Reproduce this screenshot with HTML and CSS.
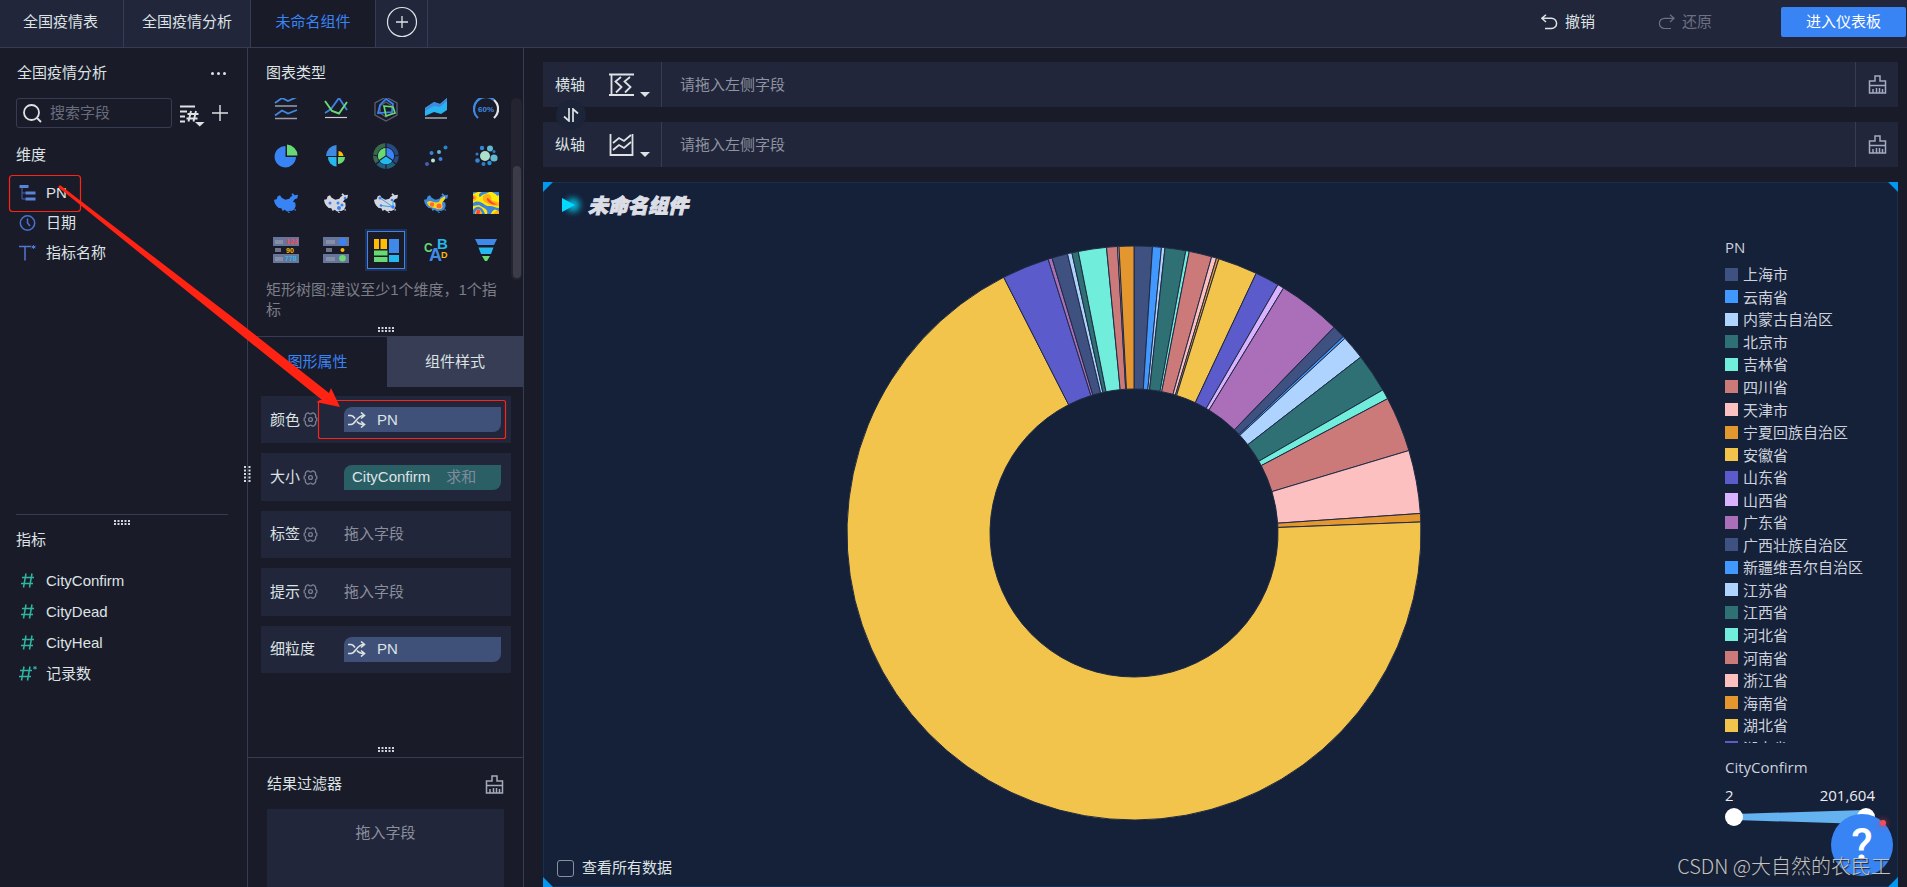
FILE: index.html
```html
<!DOCTYPE html>
<html lang="zh-CN">
<head>
<meta charset="utf-8">
<title>未命名组件</title>
<link rel="stylesheet" href="styles.css">
</head>
<body>
<svg class="sprite" aria-hidden="true">
  <symbol id="china" viewBox="0 0 72 60"><path d="M0 20 8 19 11 10 18 7 23 14 34 20 46 17 50 11 56 8 52 4 56 1 62 7 72 5 70 16 62 19 57 26 64 29 65 40 60 50 52 54 46 53 43 56 38 55 32 50 26 54 22 46 14 45 7 38 2 30ZM43 57h4v3h-4zM62 48h3v5h-3z"/></symbol>
  <symbol id="broom" viewBox="0 0 19 19"><path d="M7 6V1h5v5h5.500v12H1.500V6zM1.500 10.500h16M5 14v4M8.500 13V18M11.500 13V18M14.500 14v4" fill="none" stroke="currentColor" stroke-width="1.500"/></symbol>
  <symbol id="shuffle" viewBox="0 0 18 16"><path d="M0 12.500h3C8 12.500 8 3.500 16 3.500M0 3.500h3c2 0 3 1.500 4 3M9 9.500c1.500 2 3 3 7 3M13 .5l3.500 3L13 6.500M13 9.500l3.500 3-3.500 3" fill="none" stroke="currentColor" stroke-width="1.600"/></symbol>
  <symbol id="gear" viewBox="0 0 15 15"><path d="M4 1.200Q5.500.5 6.300 1.500 7.500 2.300 8.700 1.500 9.500.5 11 1.200L12.300 2.500Q13 4 12.500 5 12.800 6 13.800 6.300V8.700Q12.800 9 12.500 10 13 11 12.300 12.500L11 13.800Q9.500 14.500 8.700 13.500 7.500 12.700 6.300 13.500 5.500 14.500 4 13.800L2.700 12.500Q2 11 2.500 10 2.200 9 1.200 8.700V6.300Q2.200 6 2.500 5 2 4 2.700 2.500Z" fill="none" stroke="currentColor" stroke-width="1.300"/><circle cx="7.500" cy="7.500" r="1.900" fill="none" stroke="currentColor" stroke-width="1.300"/></symbol>
  <symbol id="hash" viewBox="0 0 14 15"><path d="M5 0.500 2.500 14.500M11 .5 8.500 14.500M1 4.500h12M0 10.500h12" fill="none" stroke="currentColor" stroke-width="1.500"/></symbol>
  <symbol id="grip" viewBox="0 0 16 5"><path d="M0 1h16M0 4h16" stroke="currentColor" stroke-width="2" stroke-dasharray="2 1.500" fill="none"/></symbol>
</svg>

<header class="topbar">
  <nav class="tabs">
    <button class="tab tab-a">全国疫情表</button>
    <button class="tab tab-b">全国疫情分析</button>
    <button class="tab tab-c active">未命名组件</button>
    <button class="tab tab-add" aria-label="添加"><svg width="32" height="32" viewBox="0 0 32 32"><circle cx="16" cy="16" r="14.500" fill="none" stroke="currentColor" stroke-width="1.200"/><path d="M10 16h12M16 10v12" stroke="currentColor" stroke-width="1.300"/></svg></button>
  </nav>
  <div class="actions">
    <button class="action"><svg width="17" height="16" viewBox="0 0 17 16"><path d="M5 .7.900 4.300 5 8M1 4.300h9.500a5 5 0 0 1 0 10.200H4" fill="none" stroke="currentColor" stroke-width="1.500"/></svg>撤销</button>
    <button class="action off"><svg width="17" height="16" viewBox="0 0 17 16"><path d="M12 .7l4.100 3.600L12 8M16 4.300H6.500a5 5 0 0 0 0 10.200H13" fill="none" stroke="currentColor" stroke-width="1.200"/></svg>还原</button>
    <button class="enter">进入仪表板</button>
  </div>
</header>

<div class="work">
  <aside class="fields">
    <div class="fields-head"><span>全国疫情分析</span><button class="dots" aria-label="更多"><i></i><i></i><i></i></button></div>
    <div class="search-row">
      <label class="search"><svg width="19" height="19" viewBox="0 0 19 19"><circle cx="8.500" cy="8.500" r="7.500" fill="none" stroke="currentColor" stroke-width="1.800"/><path d="M14 14l4 4" stroke="currentColor" stroke-width="1.800"/></svg><input type="text" placeholder="搜索字段" aria-label="搜索字段"></label>
      <button class="plain sorter" aria-label="筛选"><svg width="26" height="23" viewBox="0 0 26 23"><path d="M1 2.500h15M1 7.500h7M1 12.500h5M1 17.500h5" stroke="currentColor" stroke-width="2"/><path d="M12 7 9.500 17.500M17 7 14.500 17.500M8.500 10h11M7.500 14.500h11" stroke="currentColor" stroke-width="1.900"/><path d="M16 18h9.500L20.700 22.500z" fill="currentColor"/></svg></button>
      <button class="plain" aria-label="新增"><svg width="16" height="16" viewBox="0 0 16 16"><path d="M0 8h16M8 0v16" stroke="currentColor" stroke-width="1.400"/></svg></button>
    </div>
    <section class="dims">
      <h2>维度</h2>
      <ul>
        <li><svg width="16" height="16" viewBox="0 0 16 16"><path d="M2.500 2v12H6M2.500 8H6" fill="none" stroke="#3c65bd"/><path d="M0 1.500h9M6 8h10M6 14h10" stroke="#5b83d8" stroke-width="3"/></svg>PN</li>
        <li><svg width="16" height="16" viewBox="0 0 16 16"><circle cx="8" cy="8" r="7.200" fill="none" stroke="#4a72d0" stroke-width="1.500"/><path d="M8 3.500V8l2.500 3" fill="none" stroke="#4a72d0" stroke-width="1.500"/></svg>日期</li>
        <li><svg width="17" height="16" viewBox="0 0 17 16"><path d="M0 1.500h12M6 1.500V15.500" stroke="#4f78d0" stroke-width="1.500"/><path d="M14.500 0v4M12.500 1l4 2M16.500 1l-4 2" stroke="#4f78d0"/></svg>指标名称</li>
      </ul>
    </section>
    <section class="measures">
      <svg class="grip" width="16" height="5"><use href="#grip"/></svg>
      <h2>指标</h2>
      <ul>
        <li><svg width="14" height="15"><use href="#hash"/></svg>CityConfirm</li>
        <li><svg width="14" height="15"><use href="#hash"/></svg>CityDead</li>
        <li><svg width="14" height="15"><use href="#hash"/></svg>CityHeal</li>
        <li><svg width="18" height="15" viewBox="0 0 18 15"><use href="#hash" width="14" height="15"/><path d="M16 0v3.500M14.300 1l3.400 1.700M17.700 1l-3.400 1.700" stroke="currentColor"/></svg>记录数</li>
      </ul>
    </section>
    <svg class="grip-v" width="7" height="16" viewBox="0 0 7 16"><path d="M1 0v16M5.500 0v16" stroke="#d5dae2" stroke-width="2" stroke-dasharray="2 1.500"/></svg>
  </aside>

  <aside class="config">
    <section class="types">
      <h2>图表类型</h2>
      <div class="type-scroll">
        <div class="type-grid">
          <button><svg width="26" height="26" viewBox="0 0 26 26"><path d="M2 10h22M2 22.500h22" stroke="#9a9dab" stroke-width="1.300"/><path d="M2 7l7-5 6 3 9-4M2 19.500l7-5 6 3 9-3.500" stroke="#3f8ae0" stroke-width="1.800" fill="none"/></svg></button>
          <button><svg width="26" height="26" viewBox="0 0 26 26"><path d="M2 21.500h22" stroke="#c9ccd4" stroke-width="1.200"/><path d="M2 17 8 13 16 2 24 14" stroke="#3f7fe0" stroke-width="1.900" fill="none"/><path d="M2 5 9 15l7 2.500L24 6" stroke="#69d973" stroke-width="1.900" fill="none"/></svg></button>
          <button><svg width="26" height="26" viewBox="0 0 26 26"><path d="M13 1l11 6v12l-11 6-11-6V7zM13 6l6 4v7l-6 4-6-4v-7z" stroke="#5a5e6c" stroke-width="1.300" fill="none"/><path d="M13 3l7 5-1 8-14 1 2-8z" stroke="#3884f4" stroke-width="1.700" fill="none"/><path d="M11 10l9 1 2 6-9 3z" stroke="#69d973" stroke-width="1.700" fill="none"/></svg></button>
          <button><svg width="26" height="26" viewBox="0 0 26 26"><path d="M2 22h22" stroke="#c9ccd4" stroke-width="1.200"/><path d="M2 12l9-6 6 2 7-6v12l-6 4-7-2-9 4z" fill="#28b4f0"/><path d="M2 12l9-6 6 2 7-6v3l-7 6-6-1-9 5z" fill="#3f8ae0"/></svg></button>
          <button><svg width="26" height="26" viewBox="0 0 26 26"><path d="M5 22A12 12 0 0 1 21 4" stroke="#3f8ae0" stroke-width="2.300" fill="none"/><path d="M21 4a12 12 0 0 1 0 18" stroke="#e2e4e8" stroke-width="2.300" fill="none"/><text x="13" y="16" font-size="8" text-anchor="middle" fill="#3f8ae0" class="bold">60%</text></svg></button>

          <button><svg width="26" height="26" viewBox="0 0 26 26"><path d="M12.500 3v11H23A10.700 10.700 0 1 1 12.500 3z" fill="#3884f4"/><path d="M14 1.500A11 11 0 0 1 24.500 12.500H14z" fill="#69d973"/></svg></button>
          <button><svg width="26" height="26" viewBox="0 0 26 26"><path d="M13.500 2v11H3A11 11 0 0 1 13.500 2z" fill="#3f8ae0"/><path d="M15.500 8a6 6 0 0 1 5 5h-5z" fill="#fdbb06"/><path d="M13.500 14v9.500A9 9 0 0 1 5 14z" fill="#25b8ee"/><path d="M15 14h7a7 7 0 0 1-7 7z" fill="#69d973"/></svg></button>
          <button><svg width="26" height="26" viewBox="0 0 26 26"><circle cx="13" cy="13" r="10.800" fill="none" stroke="#27497e" stroke-width="3.800"/><path d="M4 19A10.800 10.800 0 0 1 12 2.200" fill="none" stroke="#3a6948" stroke-width="3.800"/><path d="M4 19A10.800 10.800 0 0 0 22 19" fill="none" stroke="#216079" stroke-width="3.800"/><path d="M12.500 5v7.500L6 17A8 8 0 0 1 12.500 5z" fill="#69d973"/><path d="M13.500 5v7.500L20 17A8 8 0 0 0 13.500 5z" fill="#3884f4"/><path d="M13 13.500l6.500 4.500a8 8 0 0 1-13 0z" fill="#25b8ee"/><path d="M13 0v5M0 12l4.500 1M26 12l-4.500 1M3 21l4-3M23 21l-4-3M13 22v4" stroke="#1a1b29" stroke-width="1.200"/></svg></button>
          <button><svg width="26" height="26" viewBox="0 0 26 26"><circle cx="4" cy="21" r="2" fill="#435fb0"/><circle cx="10" cy="17.500" r="2" fill="#b8e6cf"/><circle cx="17.500" cy="16" r="2" fill="#3f7fe0"/><circle cx="8.500" cy="10" r="2" fill="#3884d8"/><circle cx="16" cy="9" r="2" fill="#65b6c8"/><circle cx="22.500" cy="4.500" r="2" fill="#2187c9"/></svg></button>
          <button><svg width="26" height="26" viewBox="0 0 26 26"><circle cx="12" cy="13" r="5" fill="#addfcb"/><circle cx="9" cy="5" r="2.200" fill="#3884d8"/><circle cx="17" cy="5.500" r="3" fill="#63b9cf"/><circle cx="21" cy="8.500" r="1.500" fill="#2c7fd0"/><circle cx="21" cy="15" r="3.600" fill="#63b9cf"/><circle cx="4" cy="11" r="1.500" fill="#2c7fd0"/><circle cx="4.500" cy="17.500" r="2.300" fill="#3884d8"/><circle cx="10.500" cy="21" r="2" fill="#2c7fd0"/><circle cx="16.500" cy="20" r="2.200" fill="#2490d8"/></svg></button>

          <button><svg width="24" height="20" fill="#3884f4"><use href="#china"/></svg></button>
          <button><svg width="24" height="20" viewBox="0 0 24 20"><use href="#china" fill="#d3d6de"/><g fill="#3884f4"><circle cx="6" cy="10" r="1.500"/><circle cx="14" cy="10" r="1.500"/><circle cx="15" cy="15" r="2"/><circle cx="18" cy="12" r="1.500"/><circle cx="21" cy="5" r="1.300"/></g></svg></button>
          <button><svg width="24" height="20" viewBox="0 0 24 20"><use href="#china" fill="#d3d6de"/><path d="M6 5l13 9M7 12.500l12 1.500M19 7v7" stroke="#35a3ea"/><g fill="#3884f4"><circle cx="6" cy="5" r="1.500"/><circle cx="7" cy="12.500" r="1.300"/><circle cx="19" cy="14" r="1.700"/><circle cx="18" cy="7" r="1.300"/></g></svg></button>
          <button><svg width="24" height="20" viewBox="0 0 24 20"><use href="#china" fill="#3f8ae0"/><path d="M3 9c5-3 6 2 12 0 1-4 5-5 6-6 1 4-3 5-3 8 2 5-2 6-5 5-4-2-9-1-10-7z" fill="#fdd514"/><circle cx="8" cy="11.500" r="2.200" fill="#fb6b35"/><circle cx="15" cy="13" r="2.500" fill="#fb6b35"/></svg></button>
          <button><svg width="26" height="22" viewBox="0 0 26 22"><path d="M0 0h26v22H0z" fill="#ffe90a"/><path d="M0 2l5-2H0zM7 5c4-4 7-3 9-5H9C6 1 5 4 7 5zM19 0c2 2 4 1 5 4l2-1V0zM0 11c8-5 11 4 17 3 3 0 6 2 9 2v4c-5-5-7 0-8 2h-4c2-5-4-6-8-9L0 14zM0 18c3-5 9-5 12 4H9C8 17 4 15 2 22H0z" fill="#3d83db"/><path d="M10 4c5-5 10 0 8 4 3 2 7 1 8 3v3c-6 0-13-2-16-6zM0 3c5 0 5 5 0 6zM2 22c0-6 6-6 7 0zM20 22l4-4 2 2v2z" fill="#ffb013"/><path d="M14 6c3 0 4 5 10 6-4 2-11-2-10-6zM0 4c2 1 2 3 0 3zM4 18c3-2 4 2 2 4H3z" fill="#ff453d"/></svg></button>

          <button><svg width="26" height="26" viewBox="0 0 26 26"><path d="M0 0h26v9H0zM0 17h26v9H0z" fill="#68759b"/><path d="M2 3h8v4H2zM2 11h6v4H2zM2 20h8v4H2z" fill="#929aad" opacity=".7"/><g class="bold" font-size="7"><text x="13" y="7" fill="#ff434c">123</text><text x="13" y="15.500" fill="#fdbb06">90</text><text x="12" y="24" fill="#2eb6e8">778</text></g></svg></button>
          <button><svg width="26" height="26" viewBox="0 0 26 26"><path d="M0 0h26v9H0zM0 17h26v9H0z" fill="#68759b"/><path d="M3 3h9v4H3zM3 11h6v4H3zM3 20h9v4H3z" fill="#929aad" opacity=".7"/><circle cx="19.500" cy="4.700" r="3.800" fill="#3884f4"/><circle cx="19.500" cy="13" r="2" fill="#fdbb06"/><circle cx="19.500" cy="21.300" r="3.300" fill="#69d973"/></svg></button>
          <button class="chosen"><svg width="26" height="24" viewBox="0 0 26 24"><path d="M1 1h5v10H1zM7.500 1H14v10H7.500z" fill="#ffbc05"/><path d="M16 1h10v14H16z" fill="#3f8ae8"/><path d="M1 12.500h13.500v5H1zM1 19h13.500v5H1z" fill="#69d973"/><path d="M16 17h10v7H16z" fill="#25b8ee"/></svg></button>
          <button><svg width="26" height="26" viewBox="0 0 26 26" class="bold"><text x="1" y="15" font-size="12" fill="#69d973">C</text><text x="14" y="12" font-size="15" fill="#25b8ee">B</text><text x="6" y="24" font-size="18" fill="#3f8ae8">A</text><text x="18" y="21" font-size="9" fill="#fdbb06">D</text></svg></button>
          <button><svg width="26" height="26" viewBox="0 0 26 26"><path d="M2 2h22l-3 6H5z" fill="#3f8ae8"/><path d="M5.500 10.500h15L18 17H8z" fill="#25b8ee"/><path d="M9 19h8l-3 5h-2z" fill="#69d973"/></svg></button>
        </div>
        <div class="scrollbar"><i></i></div>
      </div>
      <p class="hint">矩形树图:建议至少1个维度，1个指标</p>
      <svg class="grip" width="16" height="5"><use href="#grip"/></svg>
    </section>

    <section class="props">
      <div class="prop-tabs"><button class="on">图形属性</button><button>组件样式</button></div>
      <div class="prop-list">
        <div class="prop"><span class="name">颜色<svg width="15" height="15"><use href="#gear"/></svg></span><span class="pill"><svg width="18" height="16"><use href="#shuffle"/></svg>PN</span></div>
        <div class="prop"><span class="name">大小<svg width="15" height="15"><use href="#gear"/></svg></span><span class="pill green">CityConfirm<em>求和</em></span></div>
        <div class="prop"><span class="name">标签<svg width="15" height="15"><use href="#gear"/></svg></span><span class="empty">拖入字段</span></div>
        <div class="prop"><span class="name">提示<svg width="15" height="15"><use href="#gear"/></svg></span><span class="empty">拖入字段</span></div>
        <div class="prop"><span class="name">细粒度</span><span class="pill"><svg width="18" height="16"><use href="#shuffle"/></svg>PN</span></div>
      </div>
      <svg class="grip" width="16" height="5"><use href="#grip"/></svg>
    </section>

    <section class="filter">
      <div class="filter-head"><h2>结果过滤器</h2><button class="plain soft" aria-label="清空"><svg width="19" height="19"><use href="#broom"/></svg></button></div>
      <div class="drop">拖入字段</div>
    </section>
  </aside>

  <main class="canvas">
    <div class="axes">
      <div class="axis">
        <div class="axis-name">横轴<svg width="41" height="26" viewBox="0 0 41 26"><path d="M2.500 2v21M0 2.500h25M0 23h25" fill="none" stroke="currentColor" stroke-width="1.800"/><path d="M12 5 6.500 9.500l6 5.500L7 20.500M21 5l-5.500 4.500 6 5.500L16 20.500" fill="none" stroke="currentColor" stroke-width="1.800"/><path d="M31 20h10l-5 5z" fill="currentColor"/></svg></div>
        <div class="axis-drop">请拖入左侧字段</div>
        <button class="axis-clear" aria-label="清空横轴"><svg width="19" height="19"><use href="#broom"/></svg></button>
      </div>
      <button class="swap" aria-label="交换"><svg width="16" height="14" viewBox="0 0 16 14"><path d="M6 0v13L1 8.500M10 14V1l5 4.500" fill="none" stroke="currentColor" stroke-width="1.700"/></svg></button>
      <div class="axis">
        <div class="axis-name">纵轴<svg width="41" height="26" viewBox="0 0 41 26"><path d="M1.500 2v21h22V2" fill="none" stroke="currentColor" stroke-width="1.800"/><path d="M4 11l6-5 5 3 7-6M4 18l6-5 5 3 7-6" fill="none" stroke="currentColor" stroke-width="1.800"/><path d="M31 20h10l-5 5z" fill="currentColor"/></svg></div>
        <div class="axis-drop">请拖入左侧字段</div>
        <button class="axis-clear" aria-label="清空纵轴"><svg width="19" height="19"><use href="#broom"/></svg></button>
      </div>
    </div>

    <section class="chart">
      <i class="corner tl"></i><i class="corner tr"></i><i class="corner bl"></i><i class="corner br"></i>
      <div class="chart-head"><span class="marker"></span><h1>未命名组件</h1></div>
      <div class="chart-body">
        <div class="plot"><svg id="donut" viewBox="-288 -288 576 576"></svg></div>
        <div class="legend">
          <h3>PN</h3>
          <div class="legend-view"><ul id="legend"></ul></div>
          <h3 class="size-title">CityConfirm</h3>
          <div class="size-values"><span>2</span><span>201,604</span></div>
          <div class="range">
            <svg viewBox="0 0 150 18" width="150" height="18"><path d="M10 6 140 2v14L10 12z" fill="#64b3f0"/></svg>
            <input type="range" min="2" max="201604" value="2" aria-label="最小值">
            <input type="range" min="2" max="201604" value="201604" aria-label="最大值">
          </div>
        </div>
      </div>
      <div class="chart-foot"><label><input type="checkbox">查看所有数据</label></div>
    </section>
  </main>
</div>

<button class="help" aria-label="帮助">?<i></i></button>
<div class="watermark">CSDN @大自然的农民工</div>
<svg class="notes" width="530" height="460" viewBox="0 0 530 460" aria-hidden="true">
  <g fill="none" stroke="#ff2314" stroke-width="1.200"><rect x="9.500" y="175.500" width="71" height="36" rx="3"/><rect x="318.500" y="400.500" width="187" height="38" rx="2"/></g>
  <path d="M58 187 60 185 240 323 329 393 331 388 340 407 316 402 322 400 240 334Z" fill="#ff2314"/>
</svg>
<script src="chart.js"></script>
</body>
</html>
```

FILE: styles.css
```css
* { box-sizing: border-box; }
body {
  margin: 0;
  height: 100vh;
  display: flex;
  flex-direction: column;
  overflow: hidden;
  position: relative;
  background: #1a1b29;
  color: #dde3e4;
  font: 15px/20px "Liberation Sans", "Noto Sans CJK SC", sans-serif;
}
button, input { font: inherit; color: inherit; }
button { background: none; border: 0; padding: 0; }
h1, h2, h3, p, ul { margin: 0; padding: 0; font-size: 15px; font-weight: 400; list-style: none; }
svg { display: block; flex: none; }
.sprite { position: absolute; width: 0; height: 0; }
.bold { font-family: "Liberation Sans", sans-serif; font-weight: 700; }

.topbar { flex: none; display: flex; justify-content: space-between; height: 48px; background: #21263b; border-bottom: 1px solid #353d54; }
.tabs { display: flex; }
.tab { border-right: 1px solid #353d54; padding-bottom: 4px; display: flex; align-items: center; justify-content: center; }
.tab-a { width: 124px; padding-right: 2px; }
.tab-b { width: 127px; }
.tab-c { width: 125px; }
.tab-add { width: 52px; }
.tab.active { background: #1a1b29; color: #3884f4; }
.actions { display: flex; align-items: flex-start; padding: 7px 1px 0 0; }
.action { display: flex; align-items: center; gap: 7px; height: 30px; margin-right: 63px; }
.action.off { color: #6c7183; margin-right: 69px; }
.enter { width: 125px; height: 30px; border-radius: 2px; background: #3884f4; color: #fff; }

.work { flex: 1; min-height: 0; display: flex; }
.fields { flex: none; position: relative; width: 248px; display: flex; flex-direction: column; border-right: 1px solid #353d54; }
.fields-head { display: flex; justify-content: space-between; padding: 15px 21px 0 17px; }
.dots { display: flex; align-items: center; gap: 3px; }
.dots i { width: 3px; height: 3px; border-radius: 50%; background: #dde3e4; }
.search-row { display: flex; align-items: center; gap: 7px; padding: 15px 19px 0 16px; }
.search { flex: none; display: flex; align-items: center; gap: 8px; width: 156px; height: 30px; border: 1px solid #353d54; border-radius: 3px; padding-left: 6px; }
.search input { width: 100px; background: none; border: 0; padding: 0; outline: 0; }
.search input::placeholder { color: #686d7e; opacity: 1; }
.plain { display: flex; }
.sorter { padding-top: 4px; }
.soft { color: #a5abba; }
.dims { flex: 1; padding: 17px 17px 0 16px; }
.dims ul { padding-top: 13px; }
.dims li { display: flex; align-items: center; height: 30px; padding-left: 3px; gap: 10px; }
.dims li svg { width: 17px; }
.measures { flex: none; height: 373px; margin: 0 19px 0 16px; border-top: 1px solid #353d54; padding-top: 5px; }
.measures h2 { margin-top: 5px; }
.measures ul { padding-top: 15px; }
.measures li { display: flex; align-items: center; height: 31px; padding-left: 3px; color: #dde3e4; }
.measures li svg { width: 18px; margin-right: 9px; color: #2fb6a0; }
.measures li svg use { width: 14px; }
.grip { margin: 0 auto; color: #cfd4de; }
.grip-v { position: absolute; right: -4px; top: 418px; }

.config { flex: none; width: 276px; display: flex; flex-direction: column; border-right: 1px solid #353d54; }
.types { flex: none; padding: 15px 0 4px; }
.types h2 { padding-left: 18px; }
.type-scroll { display: flex; height: 182px; margin-top: 15px; overflow: hidden; }
.type-grid { display: grid; grid-template-columns: repeat(5, 50px); grid-auto-rows: 47px; align-content: end; padding-left: 13px; width: 263px; padding-bottom: 7px; }
.type-grid button { display: grid; place-items: center; }
.type-grid .chosen { width: 38px; height: 38px; place-self: center; border: 1px solid #3884f4; box-shadow: 0 0 0 2px #20304e; }
.scrollbar { width: 11px; border-radius: 6px; background: #232430; padding: 68px 1px 2px 2px; }
.scrollbar i { display: block; height: 100%; border-radius: 4px; background: #3b3c48; }
.hint { padding: 0 20px 0 18px; color: #7c7e88; }
.types .grip { margin-top: 7px; }
.props { flex: 1; min-height: 0; display: flex; flex-direction: column; border-top: 1px solid #353d54; padding-bottom: 5px; }
.prop-tabs { display: grid; grid-template-columns: 139px 1fr; height: 50px; flex: none; }
.prop-tabs button { background: #363d55; }
.prop-tabs .on { background: none; color: #3884f4; }
.prop-list { display: grid; grid-auto-rows: 1fr; gap: 10px; height: 277px; margin: 9px 12px 0 13px; }
.prop { display: flex; align-items: center; background: #21263b; padding: 0 10px 0 9px; }
.name { display: flex; align-items: center; gap: 3px; width: 74px; }
.name svg { color: #7a8094; }
.pill { flex: 1; display: flex; align-items: center; height: 25px; border-radius: 8px 0; background: #3f5079; padding-left: 4px; gap: 11px; }
.pill.green { background: #2a5f66; padding-left: 8px; gap: 16px; }
.pill em { font-style: normal; color: #7f8c9c; }
.empty { color: #8b8f9c; }
.props .grip { margin-top: auto; }
.filter { flex: none; border-top: 1px solid #353d54; padding: 16px 19px 0; }
.filter-head { display: flex; justify-content: space-between; align-items: center; }
.drop { height: 78px; margin-top: 15px; padding-top: 14px; background: #21263b; color: #8b8f9c; text-align: center; }

.canvas { flex: 1; min-width: 0; display: flex; flex-direction: column; gap: 15px; padding: 14px 9px 0 19px; }
.axes { position: relative; display: grid; gap: 15px; }
.axis { display: flex; height: 45px; background: #21263b; }
.axis-name { display: flex; align-items: center; gap: 24px; width: 119px; padding-left: 12px; border-right: 1px solid #353d54; }
.axis-drop { flex: 1; display: flex; align-items: center; padding-left: 18px; color: #8f93a0; }
.axis-clear { width: 43px; border-left: 1px solid #353d54; display: grid; place-items: center; color: #a3abc0; }
.swap { position: absolute; left: 13px; top: 38px; width: 30px; height: 30px; border-radius: 50%; background: #1b2438; display: grid; place-items: center; z-index: 1; }

.chart { position: relative; flex: 1; min-height: 0; display: flex; flex-direction: column; background: #152039; border: 1px solid #152f50; font-family: "Open Sans", "Noto Sans CJK SC", sans-serif; color: #cdd2dc; }
.corner { position: absolute; width: 10px; height: 10px; background: #0098f0; }
.tl { left: -1px; top: -1px; clip-path: polygon(0 0, 100% 0, 0 100%); }
.tr { right: -1px; top: -1px; clip-path: polygon(0 0, 100% 0, 100% 100%); }
.bl { left: -1px; bottom: -1px; clip-path: polygon(0 0, 100% 100%, 0 100%); }
.br { right: -1px; bottom: -1px; clip-path: polygon(100% 0, 100% 100%, 0 100%); }
.chart-head { flex: none; display: flex; align-items: center; height: 48px; padding: 0 0 4px 18px; gap: 8px; }
.marker { width: 18px; height: 14px; position: relative; }
.marker::before { content: ""; position: absolute; inset: 0 0 0 4px; border-radius: 50%; background: #05b4d6; filter: blur(3px); }
.marker::after { content: ""; position: absolute; inset: 0 5px 0 0; background: #04d8ff; clip-path: polygon(0 0, 100% 50%, 0 100%); }
.chart-head h1 { font: italic 900 20px/28px "Noto Sans CJK SC", sans-serif; color: #dcdee6; -webkit-text-stroke: 1px #dcdee6; }
.chart-body { flex: 1; min-height: 0; display: flex; }
.plot { flex: 1; min-width: 0; display: grid; place-items: center; padding-right: 2px; }
.plot svg { width: 576px; height: 576px; max-width: 100%; }
.plot path { stroke: #202b45; stroke-width: 1; }
.legend { flex: none; width: 172px; display: flex; flex-direction: column; padding: 6px 22px 9px 0; }
.legend-view { flex: 1; min-height: 0; overflow: hidden; margin: 6px -22px 14px 0; }
.legend-view ul { display: grid; grid-auto-rows: 1fr; height: 496px; }
.legend-view li { display: flex; align-items: center; gap: 5px; white-space: nowrap; line-height: 22px; }
.legend-view i { width: 13px; height: 13px; }
.size-values { display: flex; justify-content: space-between; margin: 8px 0 3px; color: #eceef3; }
.range { position: relative; height: 18px; }
.range input { position: absolute; inset: 0; width: 100%; height: 18px; margin: 0; background: none; appearance: none; pointer-events: none; }
.range input::-webkit-slider-thumb { appearance: none; width: 18px; height: 18px; border-radius: 50%; background: #fff; pointer-events: auto; }
.chart-foot { flex: none; height: 51px; padding: 23px 0 0 13px; font-family: "Liberation Sans", "Noto Sans CJK SC", sans-serif; }
.chart-foot label { display: inline-flex; align-items: center; gap: 8px; color: #dde3e4; }
.chart-foot input { appearance: none; width: 17px; height: 17px; margin: 0; border: 1px solid #8a8fa0; border-radius: 3px; }

.help { position: absolute; right: 14px; bottom: 11px; width: 62px; height: 62px; border-radius: 50%; background: #3884f4; color: #fff; font: 500 44px/62px Roboto, sans-serif; }
.help i { position: absolute; right: 7px; top: 6px; width: 6px; height: 6px; border-radius: 50%; background: #f04f57; box-shadow: 0 0 6px #e04050; }
.watermark { position: absolute; right: 16px; bottom: 7px; font: 20px/28px "Noto Sans CJK SC", sans-serif; font-weight: 300; color: #c0c3c9; text-shadow: 1px 1px 1px #222; pointer-events: none; white-space: nowrap; }
.notes { position: absolute; left: 0; top: 0; pointer-events: none; }
```

FILE: chart.js
```js
const palette = ['#3f5180', '#4198ff', '#aed3ff', '#2f7074', '#70eddb', '#cb7979', '#fcc0c0', '#e4962f', '#f3c44b', '#5c5bcc', '#d9b3ff', '#ab6eb8'];
const provinces = ['上海市', '云南省', '内蒙古自治区', '北京市', '吉林省', '四川省', '天津市', '宁夏回族自治区', '安徽省', '山东省', '山西省', '广东省', '广西壮族自治区', '新疆维吾尔自治区', '江苏省', '江西省', '河北省', '河南省', '浙江省', '海南省', '湖北省', '湖南省'];
// The palette repeats after its twelfth colour, except that the second cycle stops at 湖南省.
document.getElementById('legend').innerHTML = provinces
  .map((name, i) => `<li><i style="background:${palette[i % 12]}"></i>${name}</li>`)
  .join('');

// [palette index, end angle in degrees clockwise from the top]
const slices = [
  [0, 3.7], [1, 5.5], [2, 6.2], [3, 10.4], [4, 11.1], [5, 15.7], [6, 16.7], [7, 17.2],
  [8, 25.2], [9, 30.1], [10, 31.4], [11, 44.2], [0, 46.8], [1, 47.3], [2, 52.2], [3, 60.1],
  [4, 62.1], [5, 73.3], [6, 86.1], [7, 87.8], [8, 333], [9, 342.6], [11, 343.4], [0, 346.6],
  [2, 347.5], [3, 348.8], [4, 354.5], [5, 356.7], [6, 357], [7, 360]
];
const outer = 287;
const inner = 144;
const point = (radius, deg) => {
  const a = deg * Math.PI / 180;
  return `${(radius * Math.sin(a)).toFixed(2)} ${(-radius * Math.cos(a)).toFixed(2)}`;
};
let start = 0;
document.getElementById('donut').innerHTML = slices.map(([color, end]) => {
  const large = end - start > 180 ? 1 : 0;
  const d = `M${point(outer, start)}A${outer} ${outer} 0 ${large} 1 ${point(outer, end)}L${point(inner, end)}A${inner} ${inner} 0 ${large} 0 ${point(inner, start)}Z`;
  start = end;
  return `<path d="${d}" fill="${palette[color]}"/>`;
}).join('');
```
